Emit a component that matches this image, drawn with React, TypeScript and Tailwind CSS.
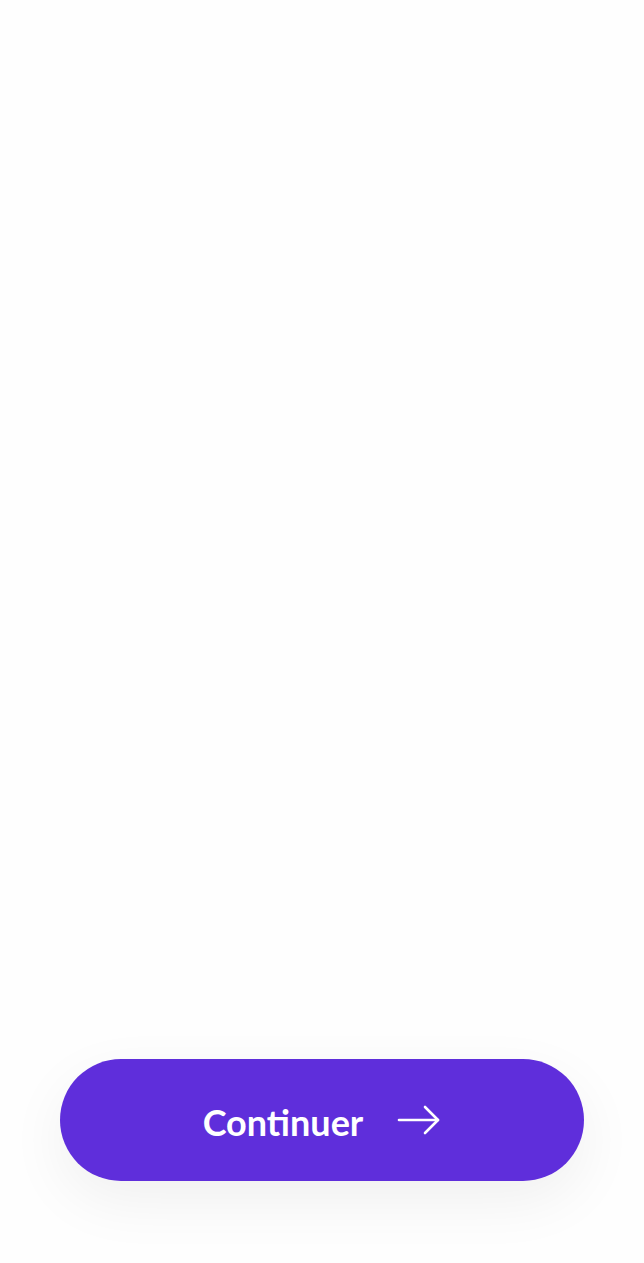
import React from 'react';

export default function App() {
  return (
    <div className="flex h-[1263px] w-full flex-col justify-end bg-[#fefefe] px-[60px] pb-[82px]">
      <button
        type="button"
        className="flex h-[122px] w-full items-center justify-center gap-[34px] rounded-full bg-[#5f2edb] text-white shadow-[0_20px_60px_rgba(0,0,0,0.06)]"
      >
        <span className="mt-[3px] font-['Lato',sans-serif] text-[36px] font-bold leading-none">Continuer</span>
        <svg width="44" height="30" viewBox="0 0 44 30" fill="none" stroke="currentColor" strokeWidth="2.6" strokeLinecap="round" strokeLinejoin="round">
          <path d="M2 15h39" />
          <path d="M28 2l13 13-13 13" />
        </svg>
      </button>
    </div>
  );
}
